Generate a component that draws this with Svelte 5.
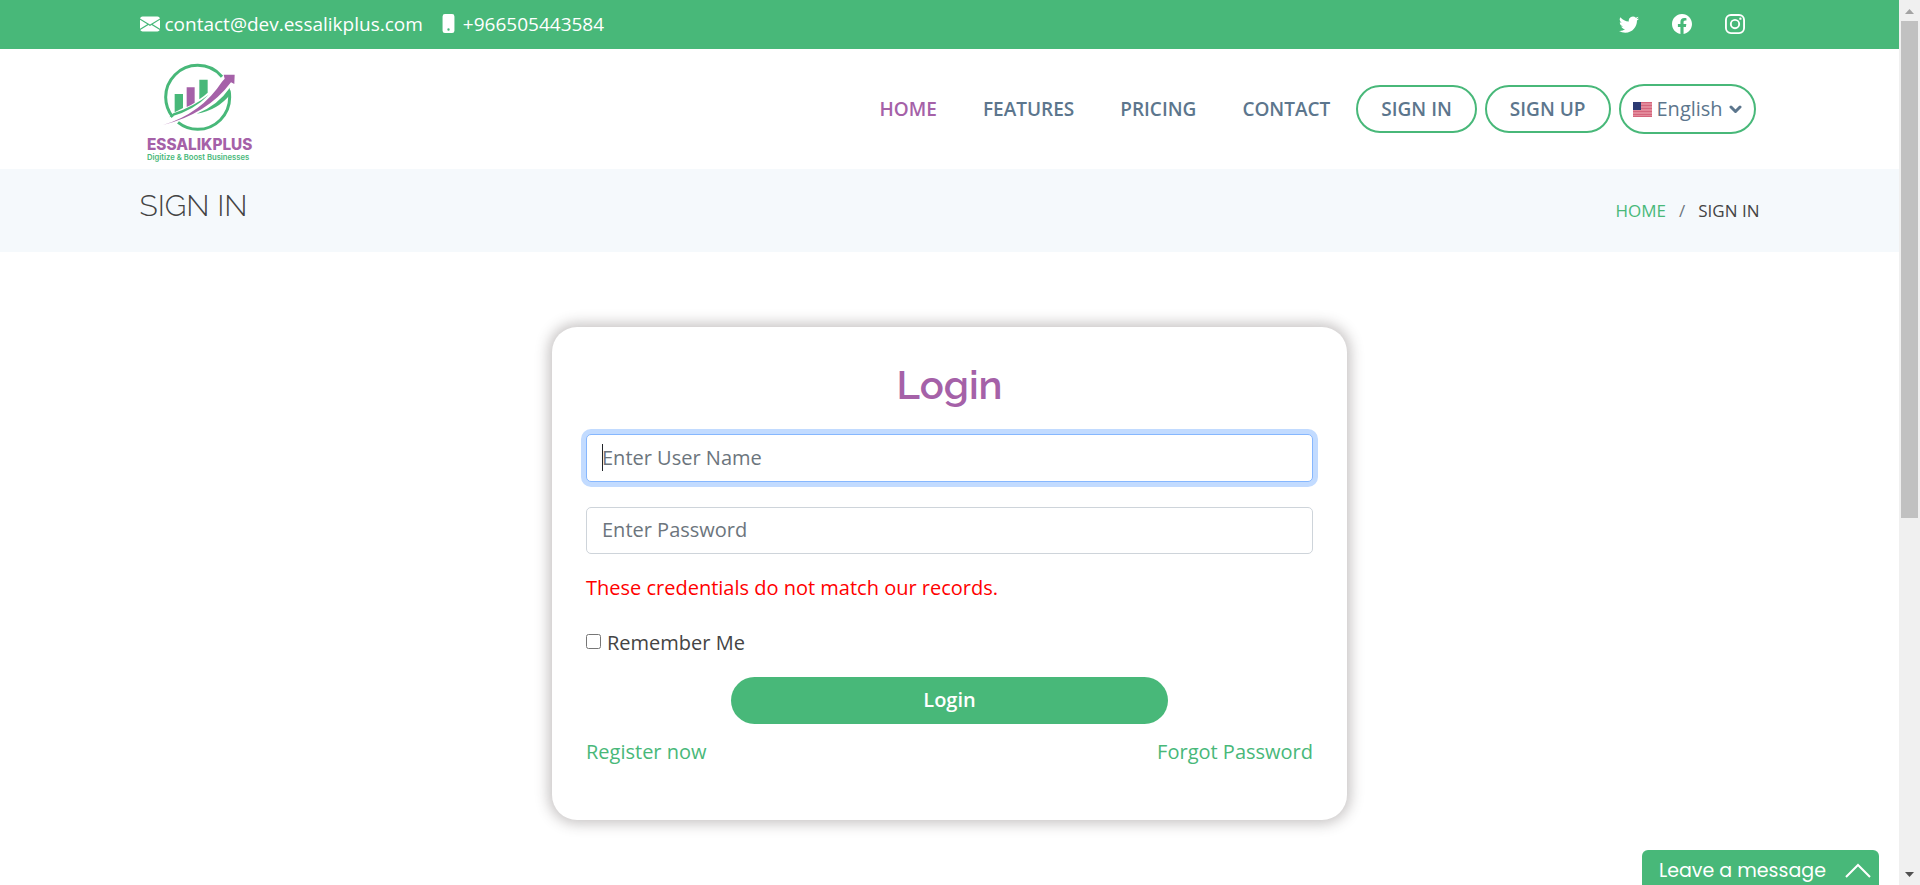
<script>
  const links = ['HOME', 'FEATURES', 'PRICING', 'CONTACT'];
  let username = $state('');
  let password = $state('');
  let remember = $state(false);
  let language = $state('English');
</script>

<div class="window">
  <div class="page">
    <div class="topbar">
      <div class="container topbar-row">
        <div class="contact">
          <a href="#mail">
            <svg width="20" height="20" viewBox="0 0 16 16" fill="currentColor" aria-hidden="true">
              <path d="M.05 3.555A2 2 0 0 1 2 2h12a2 2 0 0 1 1.95 1.555L8 8.414.05 3.555ZM0 4.697v7.104l5.803-3.558L0 4.697ZM6.761 8.83l-6.57 4.027A2 2 0 0 0 2 14h12a2 2 0 0 0 1.808-1.144l-6.57-4.027L8 9.586l-1.239-.757Zm3.436-.586L16 11.801V4.697l-5.803 3.546Z" />
            </svg>
            <span>contact@dev.essalikplus.com</span>
          </a>
          <a href="#phone">
            <svg width="19" height="19" viewBox="0 0 16 16" fill="currentColor" aria-hidden="true">
              <path d="M3 2a2 2 0 0 1 2-2h6a2 2 0 0 1 2 2v12a2 2 0 0 1-2 2H5a2 2 0 0 1-2-2V2zm6 11a1 1 0 1 0-2 0 1 1 0 0 0 2 0z" />
            </svg>
            <span>+966505443584</span>
          </a>
        </div>
        <div class="social">
          <a href="#twitter" aria-label="Twitter">
            <svg width="20" height="20" viewBox="0 0 16 16" fill="currentColor">
              <path d="M5.026 15c6.038 0 9.341-5.003 9.341-9.334 0-.14 0-.282-.006-.422A6.685 6.685 0 0 0 16 3.542a6.658 6.658 0 0 1-1.889.518 3.301 3.301 0 0 0 1.447-1.817 6.533 6.533 0 0 1-2.087.793A3.286 3.286 0 0 0 7.875 6.03a9.325 9.325 0 0 1-6.767-3.429 3.289 3.289 0 0 0 1.018 4.382A3.323 3.323 0 0 1 .64 6.575v.045a3.288 3.288 0 0 0 2.632 3.218 3.203 3.203 0 0 1-.865.115 3.23 3.23 0 0 1-.614-.057 3.283 3.283 0 0 0 3.067 2.277A6.588 6.588 0 0 1 .78 13.58a6.32 6.32 0 0 1-.78-.045A9.344 9.344 0 0 0 5.026 15z" />
            </svg>
          </a>
          <a href="#facebook" aria-label="Facebook">
            <svg width="20" height="20" viewBox="0 0 16 16" fill="currentColor">
              <path d="M16 8.049c0-4.446-3.582-8.05-8-8.05C3.58 0-.002 3.603-.002 8.05c0 4.017 2.926 7.347 6.75 7.951v-5.625h-2.03V8.05H6.75V6.275c0-2.017 1.195-3.131 3.022-3.131.876 0 1.791.157 1.791.157v1.98h-1.009c-.993 0-1.303.621-1.303 1.258v1.51h2.218l-.354 2.326H9.25V16c3.824-.604 6.75-3.934 6.75-7.951z" />
            </svg>
          </a>
          <a href="#instagram" aria-label="Instagram">
            <svg width="20" height="20" viewBox="0 0 16 16" fill="none" stroke="currentColor" stroke-width="1.5">
              <rect x="0.75" y="0.75" width="14.5" height="14.5" rx="4" />
              <circle cx="8" cy="8" r="3.35" />
              <circle cx="12.3" cy="3.7" r="0.95" fill="currentColor" stroke="none" />
            </svg>
          </a>
        </div>
      </div>
    </div>

    <header>
      <div class="container header-row">
        <a class="logo" href="#home" aria-label="Essalikplus">
          <svg width="108" height="105" viewBox="48 27 324 315">
            <g fill="none" stroke="#48b879" stroke-width="9">
              <path d="M128 201A96 96 0 0 1 107 142A96 96 0 0 1 203 46A96 96 0 0 1 276 80" />
              <path d="M144 217A96 96 0 0 0 203 238A96 96 0 0 0 299 142Q299 132 297 122" />
            </g>
            <g fill="#48b879">
              <path d="M299 114L302 132Q262 182 200 191Q262 168 299 114Z" />
              <path d="M134 132h25v42l-25 13Z" />
              <path d="M208 89h25v39q-12 11 -25 20Z" />
              <path d="M118 202L130 190Q194 168 236 134Q194 180 118 202Z" />
            </g>
            <path d="M170 112h24v46q-12 8 -24 13Z" fill="#a561a8" />
            <path d="M99 225Q214 190 276 95L284 86L281 74L314 74L313 102L303 97Q232 192 99 225Z" fill="#a561a8" />
            <text x="51" y="301" class="brand">ESSALIKPLUS</text>
            <text x="51" y="329" class="tagline">Digitize &amp; Boost Businesses</text>
          </svg>
        </a>
        <nav>
          <div class="links">
            {#each links as link, i}
              <a href="#{link.toLowerCase()}" class:active={i === 0}>{link}</a>
            {/each}
          </div>
          <div class="pills">
            <a class="pill" href="#signin">SIGN IN</a>
            <a class="pill" href="#signup">SIGN UP</a>
            <label class="language">
              <svg width="19" height="15" viewBox="0 0 19 15" aria-hidden="true">
                <rect width="19" height="15" fill="#e2899a" />
                <path d="M0 .5h19M0 3.5h19M0 6.5h19M0 9.5h19M0 12.5h19M0 14.5h19" stroke="#d4657c" />
                <rect width="8" height="8" fill="#2c3a72" />
              </svg>
              <select bind:value={language} aria-label="Language">
                <option>English</option>
              </select>
              <svg width="13" height="9" viewBox="0 0 13 9" fill="none" stroke="currentColor" stroke-width="3" stroke-linecap="round" stroke-linejoin="round" aria-hidden="true">
                <path d="M2 2l4.500 4.500L11 2" />
              </svg>
            </label>
          </div>
        </nav>
      </div>
    </header>

    <section class="crumbs">
      <div class="container crumbs-row">
        <h2>SIGN IN</h2>
        <ol>
          <li><a href="#home">HOME</a></li>
          <li class="sep">/</li>
          <li>SIGN IN</li>
        </ol>
      </div>
    </section>

    <main>
      <form class="card" onsubmit={(e) => e.preventDefault()}>
        <h1>Login</h1>
        <div class="field">
          <input class="text focused" type="text" placeholder="Enter User Name" aria-label="User name" bind:value={username} />
          <span class="caret"></span>
        </div>
        <input class="text" type="password" placeholder="Enter Password" aria-label="Password" bind:value={password} />
        <p class="error">These credentials do not match our records.</p>
        <label class="remember"><input type="checkbox" bind:checked={remember} />Remember Me</label>
        <button type="submit">Login</button>
        <div class="more">
          <a href="#register">Register now</a>
          <a href="#forgot">Forgot Password</a>
        </div>
      </form>
    </main>
  </div>

  <div class="scrollbar" aria-hidden="true">
    <svg width="21" height="21" viewBox="0 0 21 21"><path d="M6 14h9l-4.500-5Z" fill="#a3a3a3" /></svg>
    <div class="track"><div class="thumb"></div></div>
    <svg width="21" height="21" viewBox="0 0 21 21"><path d="M6 8h9l-4.500 5Z" fill="#505050" /></svg>
  </div>

  <button class="chat" type="button">
    <span>Leave a message</span>
    <svg width="26" height="15" viewBox="0 0 26 15" fill="none" stroke="currentColor" stroke-width="2" aria-hidden="true"><path d="M1 14L13 2L25 14" /></svg>
  </button>
</div>

<style>
  :global(body) {
    margin: 0;
    overflow: hidden;
  }
  .window {
    --green: #48b879;
    --purple: #a561a8;
    --slate: #5c768d;
    display: flex;
    height: 100vh;
    color: #444;
    background: #fff;
    font: 20px/30px "Open Sans", sans-serif;
  }
  .window * {
    box-sizing: border-box;
  }
  a {
    color: var(--green);
    text-decoration: none;
  }
  .page {
    flex: 1;
    min-width: 0;
    overflow: hidden;
  }
  .container {
    width: 100%;
    max-width: 1650px;
    margin: 0 auto;
    padding: 0 15px;
    display: flex;
    align-items: center;
    justify-content: space-between;
  }
  .topbar {
    display: flex;
    height: 49px;
    padding-bottom: 2px;
    background: var(--green);
    font-size: 19px;
  }
  .contact,
  .social,
  .contact a {
    display: flex;
    align-items: center;
  }
  .contact {
    gap: 16px;
  }
  .contact a {
    gap: 5px;
  }
  .topbar a {
    color: #fff;
  }
  .social {
    gap: 33px;
    padding-right: 15px;
  }
  .social svg {
    display: block;
  }
  .header-row {
    height: 120px;
  }
  .logo {
    padding: 4px 6px 0;
  }
  .logo svg {
    display: block;
  }
  .brand {
    font: 800 46px "Inter", sans-serif;
    fill: #a561a8;
  }
  .tagline {
    font: 600 23px "Inter", sans-serif;
    fill: #48b879;
  }
  nav,
  .links,
  .pills {
    display: flex;
    align-items: center;
  }
  nav {
    gap: 26px;
    padding-right: 4px;
    font-size: 19px;
    font-weight: 600;
  }
  .links {
    gap: 46px;
  }
  .links a,
  .pill {
    color: var(--slate);
  }
  .links a.active {
    color: var(--purple);
  }
  .pills {
    gap: 8px;
  }
  .pill {
    padding: 7px 23px;
    border: 2px solid var(--green);
    border-radius: 25px;
  }
  .language {
    display: flex;
    align-items: center;
    gap: 5px;
    padding: 8px 12px;
    border: 2px solid var(--green);
    border-radius: 25px;
    color: var(--slate);
  }
  select {
    appearance: none;
    margin: 0;
    padding: 0;
    border: 0;
    background: none;
    color: inherit;
    font: 500 20px/30px "Open Sans", sans-serif;
  }
  .crumbs {
    background: #f5f9fc;
  }
  .crumbs-row {
    height: 83px;
  }
  h2 {
    margin: 0 0 10px;
    font: 300 30px/36px "Raleway", "Lato", sans-serif;
  }
  ol {
    display: flex;
    gap: 13px;
    margin: 0;
    padding: 0;
    list-style: none;
    font-size: 17px;
  }
  .sep {
    color: #6c757d;
  }
  main {
    padding: 75px 20px;
  }
  .card {
    display: flex;
    flex-direction: column;
    width: 100%;
    max-width: 795px;
    margin: 0 auto;
    padding: 34px 34px 53px;
    border-radius: 25px;
    box-shadow: 0 0 13px 4px rgba(60, 50, 50, 0.28);
  }
  h1 {
    margin: 0 0 25px;
    color: var(--purple);
    text-align: center;
    font: 600 40px/48px "Raleway", "Lato", sans-serif;
  }
  .field {
    position: relative;
    margin-bottom: 25px;
  }
  .text {
    display: block;
    width: 100%;
    height: 47px;
    padding: 0 15px 2px;
    border: 1px solid #ced4da;
    border-radius: 5px;
    outline: 0;
    color: #212529;
    font: 20px/30px "Open Sans", sans-serif;
  }
  .text::placeholder {
    color: #6c757d;
    opacity: 1;
  }
  .focused {
    height: 48px;
    border-color: #86b7fe;
    box-shadow: 0 0 0 5px #c2dbff;
  }
  .caret {
    position: absolute;
    left: 16px;
    top: 10px;
    width: 1px;
    height: 27px;
    background: #212529;
  }
  .error {
    margin: 19px 0 25px;
    color: #f00;
  }
  .remember {
    display: flex;
    align-items: center;
    gap: 6px;
    margin-bottom: 19px;
  }
  .remember input {
    width: 15px;
    height: 15px;
    margin: 0 0 3px;
  }
  .card button {
    align-self: center;
    width: 60%;
    height: 47px;
    margin-bottom: 13px;
    padding: 0 0 2px;
    border: 0;
    border-radius: 24px;
    background: var(--green);
    color: #fff;
    font: 600 20px/30px "Open Sans", sans-serif;
  }
  .more {
    display: flex;
    justify-content: space-between;
  }
  .scrollbar {
    display: flex;
    flex-direction: column;
    width: 21px;
    background: #f0f0f0;
  }
  .track {
    flex: 1;
    padding: 0 2px;
  }
  .thumb {
    height: 59%;
    background: #c1c1c1;
  }
  .chat {
    position: fixed;
    right: 41px;
    bottom: 0;
    display: flex;
    align-items: center;
    justify-content: space-between;
    width: 237px;
    height: 35px;
    padding: 6px 8px 0 17px;
    border: 0;
    border-radius: 6px 6px 0 0;
    background: var(--green);
    color: #fff;
    font: 400 19px/28px "Poppins", "Inter", sans-serif;
  }
</style>
